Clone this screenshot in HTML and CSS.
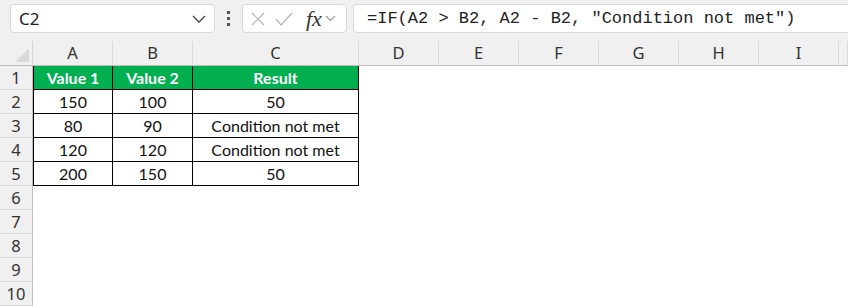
FILE: index.html
```html
<!DOCTYPE html>
<html lang="en">

<head>
  <meta charset="UTF-8">
  <title>IF formula</title>
  <link rel="stylesheet" href="styles.css">
</head>

<body>
  <!-- formula bar -->
  <div class="toolbar">
    <div class="name-box">
      <span>C2</span>
      <svg width="14" height="8" viewBox="0 0 14 8"><path d="M1 1l6 6 6-6" fill="none" stroke="#444" stroke-width="1.3"/></svg>
    </div>
    <div class="dots"><i></i><i></i><i></i></div>
    <div class="fx-buttons">
      <svg width="14" height="14" viewBox="0 0 14 14"><path d="M1 1l12 12M13 1L1 13" stroke="#b5b5b5" stroke-width="1.2"/></svg>
      <svg width="18" height="14" viewBox="0 0 18 14"><path d="M1 7l5 6L17 1" fill="none" stroke="#b5b5b5" stroke-width="1.2"/></svg>
      <span class="fx">fx</span>
      <svg width="11" height="7" viewBox="0 0 11 7"><path d="M1 1l4.5 4.5L10 1" fill="none" stroke="#999" stroke-width="1.1"/></svg>
    </div>
    <div class="formula">=IF(A2 &gt; B2, A2 - B2, "Condition not met")</div>
  </div>

  <!-- sheet -->
  <div class="sheet">
    <div class="corner"><span class="tri"></span></div>
    <div class="col-head">A</div>
    <div class="col-head">B</div>
    <div class="col-head">C</div>
    <div class="col-head">D</div>
    <div class="col-head">E</div>
    <div class="col-head">F</div>
    <div class="col-head">G</div>
    <div class="col-head">H</div>
    <div class="col-head">I</div>
    <div class="col-head"></div>

    <div class="row-head">1</div>
    <div class="cell head first">Value 1</div>
    <div class="cell head">Value 2</div>
    <div class="cell head">Result</div>
    <div class="blank"></div>

    <div class="row-head">2</div>
    <div class="cell first">150</div>
    <div class="cell">100</div>
    <div class="cell">50</div>
    <div class="blank"></div>

    <div class="row-head">3</div>
    <div class="cell first">80</div>
    <div class="cell">90</div>
    <div class="cell">Condition not met</div>
    <div class="blank"></div>

    <div class="row-head">4</div>
    <div class="cell first">120</div>
    <div class="cell">120</div>
    <div class="cell">Condition not met</div>
    <div class="blank"></div>

    <div class="row-head">5</div>
    <div class="cell first">200</div>
    <div class="cell">150</div>
    <div class="cell">50</div>
    <div class="blank"></div>

    <div class="row-head">6</div>
    <div class="empty"></div>
    <div class="row-head">7</div>
    <div class="empty"></div>
    <div class="row-head">8</div>
    <div class="empty"></div>
    <div class="row-head">9</div>
    <div class="empty"></div>
    <div class="row-head">10</div>
    <div class="empty"></div>
  </div>
</body>

</html>
```

FILE: styles.css
```css
/* page */
body {
  margin: 0;
  width: 848px;
  height: 306px;
  overflow: hidden;
  background: #fff;
  font-family: "Noto Sans", Arial, sans-serif;
}

/* formula bar */
.toolbar {
  height: 41px;
  background: #f0f0f0;
  display: flex;
  align-items: flex-start;
  padding-top: 4px;
  box-sizing: border-box;
}

.name-box {
  margin-left: 10px;
  width: 205px;
  height: 29px;
  box-sizing: border-box;
  background: #fff;
  border: 1px solid #d9d9d9;
  border-radius: 4px;
  display: flex;
  align-items: center;
  justify-content: space-between;
  padding: 0 8px 0 7px;
  font-size: 17px;
  color: #222;
}

.name-box span {
  padding-left: 1px;
}

.dots {
  width: 27px;
  height: 29px;
  display: flex;
  flex-direction: column;
  align-items: center;
  justify-content: center;
  gap: 3px;
}

.dots i {
  width: 3px;
  height: 3px;
  background: #555;
}

.fx-buttons {
  width: 105px;
  height: 29px;
  box-sizing: border-box;
  background: #fff;
  border: 1px solid #d9d9d9;
  border-radius: 4px;
  display: flex;
  align-items: center;
  gap: 10px;
  padding-left: 8px;
}

.fx {
  font-family: "Liberation Serif", serif;
  font-style: italic;
  font-size: 22px;
  color: #333;
  margin-left: 3px;
  margin-right: -7px;
  line-height: 1;
}

.formula {
  margin-left: 6px;
  flex: 1;
  height: 29px;
  box-sizing: border-box;
  background: #fff;
  border: 1px solid #d9d9d9;
  border-right: none;
  border-radius: 4px 0 0 4px;
  padding-left: 13px;
  font-family: "Liberation Mono", monospace;
  font-size: 17px;
  line-height: 27px;
  color: #222;
  white-space: nowrap;
}

/* grid */
.sheet {
  display: grid;
  grid-template-columns: 33px 80px 80px 166px repeat(6, 80px) 1fr;
  grid-template-rows: 25px repeat(10, 24px);
}

.corner {
  background: #f0f0f0;
  border-bottom: 1px solid #bdbdbd;
  border-right: 1px solid #d4d4d4;
  position: relative;
}

.tri {
  position: absolute;
  right: 3px;
  bottom: 3px;
  width: 0;
  height: 0;
  border-left: 14px solid transparent;
  border-bottom: 14px solid #dadada;
}

.col-head {
  background: #f0f0f0;
  border-bottom: 1px solid #bdbdbd;
  border-right: 1px solid #d9d9d9;
  text-align: center;
  font-size: 16.5px;
  line-height: 24px;
  color: #333;
}

.row-head {
  background: #f0f0f0;
  border-right: 1px solid #bdbdbd;
  border-bottom: 1px solid #d9d9d9;
  text-align: center;
  font-size: 16.5px;
  line-height: 23px;
  color: #333;
}

.cell {
  border-right: 1px solid #000;
  border-bottom: 1px solid #000;
  text-align: center;
  font-family: Lato, "Noto Sans", sans-serif;
  font-size: 16px;
  line-height: 23px;
  color: #111;
  white-space: nowrap;
}

.cell.first {
  border-left: 1px solid #000;
}

.cell.head {
  background: #00b050;
  color: #fff;
  font-weight: bold;
}

.blank {
  grid-column: 5 / -1;
}

.empty {
  grid-column: 2 / -1;
}
```
